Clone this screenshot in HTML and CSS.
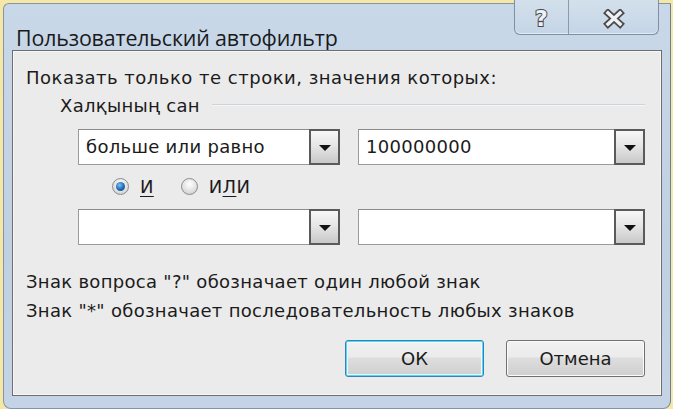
FILE: index.html
```html
<!DOCTYPE html>
<html>
<head>
  <title>Пользовательский автофильтр</title>
  <link rel="stylesheet" href="styles.css">
</head>
<body>
  <!-- Dialog window -->
  <div class="window">
    <div class="title-bar">
      <span class="title">Пользовательский автофильтр</span>
      <div class="caption-buttons">
        <span class="cap-btn cap-help">?</span>
        <span class="cap-btn cap-close">
          <svg width="22" height="20" viewBox="0 0 22 20">
            <path d="M5 4 L17 15 M17 4 L5 15" stroke="#4a4a4a" stroke-width="7" stroke-linecap="square"/>
            <path d="M5 4 L17 15 M17 4 L5 15" stroke="#eef2f6" stroke-width="3.5" stroke-linecap="square"/>
          </svg>
        </span>
      </div>
    </div>

    <div class="client">
      <div class="heading">Показать только те строки, значения которых:</div>
      <div class="group-label"><span>Халқының сан</span></div>

      <div class="combo-row">
        <div class="combo combo-op">
          <span class="combo-text">больше или равно</span>
          <span class="drop-btn"><span class="arrow"></span></span>
        </div>
        <div class="combo combo-value">
          <span class="combo-text">100000000</span>
          <span class="drop-btn"><span class="arrow"></span></span>
        </div>
      </div>

      <div class="radio-row">
        <label class="radio"><span class="radio-circle checked"></span><span><u>И</u></span></label>
        <label class="radio"><span class="radio-circle"></span><span>И<u>Л</u>И</span></label>
      </div>

      <div class="combo-row">
        <div class="combo combo-op">
          <span class="combo-text"></span>
          <span class="drop-btn"><span class="arrow"></span></span>
        </div>
        <div class="combo combo-value">
          <span class="combo-text"></span>
          <span class="drop-btn"><span class="arrow"></span></span>
        </div>
      </div>

      <div class="help">
        <div>Знак вопроса "?" обозначает один любой знак</div>
        <div>Знак "*" обозначает последовательность любых знаков</div>
      </div>

      <div class="button-row">
        <button class="btn btn-default">ОК</button>
        <button class="btn">Отмена</button>
      </div>
    </div>
  </div>
</body>
</html>
```

FILE: styles.css
```css
/* Page behind the dialog */
body {
  margin: 0;
  width: 673px;
  height: 409px;
  overflow: hidden;
  background-color: #f6e7a4;
  font-family: 'DejaVu Sans', 'Noto Sans', sans-serif;
  color: #1b1b1b;
}

/* Window frame */
.window {
  margin: 3px 0 0 3px;
  width: 668px;
  height: 406px;
  box-sizing: border-box;
  border: 1px solid #8196ad;
  border-right-color: #6d7f93;
  border-radius: 6px 0 8px 8px;
  background: linear-gradient(#c9d8e8, #bfd0e3 60%, #c4d4e6);
  display: flex;
  flex-direction: column;
}

.title-bar {
  height: 46px;
  display: flex;
  justify-content: space-between;
  align-items: flex-start;
  padding-left: 12px;
  padding-right: 11px;
}

.title {
  font-family: 'Open Sans', 'Noto Sans', sans-serif;
  font-size: 21.4px;
  line-height: 20px;
  margin-top: 24px;
  color: #1a1a1a;
  letter-spacing: -0.15px;
}

.caption-buttons {
  display: flex;
  margin-top: -4px;
  height: 34px;
  border: 1px solid #7e8fa3;
  border-top: none;
  border-radius: 0 0 6px 6px;
  background: linear-gradient(#d3e0ec, #c5d5e6);
  box-shadow: inset 0 -1px 0 #e3ebf3;
}

.cap-btn {
  display: flex;
  align-items: center;
  justify-content: center;
  padding-top: 3px;
}

.cap-help {
  width: 53px;
  border-right: 1px solid #8b9bad;
  font-family: 'DejaVu Sans', sans-serif;
  font-weight: bold;
  font-size: 22px;
  color: #eef2f6;
  -webkit-text-stroke: 2px #4a4a4a;
  paint-order: stroke fill;
}

.cap-close {
  width: 89px;
}

/* Client area */
.client {
  margin-left: 8px;
  width: 650px;
  height: 346px;
  box-sizing: border-box;
  border: 1px solid #6e6e6e;
  background-color: #ebebeb;
  box-shadow: inset 0 0 0 1px #f7f7f7;
  padding: 0 16px 0 13px;
  font-size: 18px;
  letter-spacing: 0.3px;
}

.heading {
  margin-top: 17px;
  line-height: 20px;
  letter-spacing: 0.5px;
}

.group-label {
  display: flex;
  align-items: center;
  margin-top: 8px;
  padding-left: 34px;
  line-height: 20px;
}

.group-label::after {
  content: "";
  flex: 1;
  height: 1px;
  margin-left: 12px;
  margin-top: -4px;
  background-color: #cbd3db;
  box-shadow: 0 1px 0 #f6f6f6;
}

.combo-row {
  display: flex;
  gap: 18px;
  margin-left: 52px;
  margin-top: 13px;
}

.combo {
  height: 36px;
  box-sizing: border-box;
  border: 1px solid #9a9a9a;
  border-top-color: #8a8a8a;
  background-color: #fff;
  display: flex;
  align-items: stretch;
}

.combo-op {
  width: 262px;
}

.combo-value {
  width: 287px;
}

.combo-text {
  flex: 1;
  padding-left: 7px;
  line-height: 34px;
  white-space: nowrap;
}

.drop-btn {
  width: 31px;
  box-sizing: border-box;
  border: 2px solid #5a5a5a;
  margin: -1px -1px -1px 0;
  background: linear-gradient(#f7f7f7, #e6e6e6 45%, #c9c9c9);
  display: flex;
  align-items: center;
  justify-content: center;
}

.arrow {
  width: 0;
  height: 0;
  border-left: 6px solid transparent;
  border-right: 6px solid transparent;
  border-top: 6px solid #111;
  margin-top: 2px;
}

.radio-row {
  display: flex;
  gap: 27px;
  margin-left: 86px;
  margin-top: 11px;
  height: 20px;
  align-items: center;
}

.radio {
  display: flex;
  align-items: center;
  gap: 11px;
}

.radio-circle {
  width: 17px;
  height: 17px;
  box-sizing: border-box;
  border-radius: 50%;
  border: 1px solid #8c8c8c;
  background: radial-gradient(circle at 50% 35%, #ffffff, #e2e2e2 55%, #c4c4c4);
  display: flex;
  align-items: center;
  justify-content: center;
}

.radio-circle.checked::after {
  content: "";
  width: 9px;
  height: 9px;
  border-radius: 50%;
  background: radial-gradient(circle at 40% 35%, #7fc1f2, #1b68b5 55%, #0c3f7c);
}

.radio u {
  text-underline-offset: 3px;
}

.help {
  margin-top: 22px;
  line-height: 29px;
}

.button-row {
  display: flex;
  justify-content: flex-end;
  gap: 22px;
  margin-top: 15px;
}

.btn {
  width: 139px;
  height: 37px;
  border: 1px solid #707070;
  border-radius: 3px;
  background: linear-gradient(#f2f2f2, #ebebeb 45%, #dddddd 50%, #cfcfcf);
  box-shadow: inset 0 0 0 1px #fbfbfb;
  font-family: 'DejaVu Sans', 'Noto Sans', sans-serif;
  font-size: 18px;
  color: #1b1b1b;
  padding: 0;
}

.btn-default {
  border-color: #3c7fb1;
  box-shadow: inset 0 0 0 1px #48dbfb, inset 0 0 0 2px #f4fbff;
}
```
